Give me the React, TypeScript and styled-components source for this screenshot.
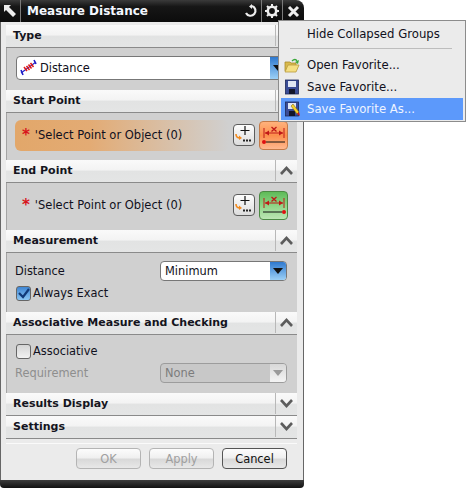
import styled, { createGlobalStyle } from "styled-components";

const GlobalStyle = createGlobalStyle`
  html, body {
    margin: 0;
    padding: 0;
    background: #fff;
  }
  body {
    font-family: "DejaVu Sans", "Liberation Sans", sans-serif;
    font-size: 11.4px;
    color: #101020;
  }
`;

const Page = styled.div`
  position: relative;
  width: 466px;
  height: 489px;
  overflow: hidden;
`;

const Dialog = styled.div`
  width: 304px;
  height: 488px;
  display: flex;
  flex-direction: column;
  background: #ebebeb;
  border-radius: 0 8px 4px 4px;
  box-sizing: border-box;
`;

const TitleBar = styled.div`
  height: 22px;
  flex: none;
  display: flex;
  align-items: center;
  background: linear-gradient(#3a3a3a 0, #161616 30%, #0c0c0c 100%);
  border-radius: 0 8px 0 0;
  color: #fff;
  box-sizing: border-box;
`;

const TitleTool = styled.div<{ $w: number; $divider?: boolean }>`
  width: ${(p) => p.$w}px;
  height: 22px;
  flex: none;
  display: flex;
  align-items: center;
  justify-content: center;
  box-sizing: border-box;
  border-right: ${(p) => (p.$divider ? "1px solid #7a7a7a" : "none")};
`;

const Title = styled.div`
  flex: 1;
  padding-left: 6px;
  font-size: 12px;
  font-weight: bold;
  color: #f4f8ff;
  white-space: nowrap;
`;

const Body = styled.div`
  flex: 1;
  display: flex;
  flex-direction: column;
  padding: 3px 7px 0 6px;
  box-shadow: inset 1px 0 #666, inset -1px 0 #666;
`;

const SectionHead = styled.div`
  height: 23px;
  flex: none;
  display: flex;
  align-items: center;
  box-sizing: border-box;
  padding-bottom: 1px;
  background: linear-gradient(#fafafa 0, #f3f3f3 46%, #e2e3e3 50%, #e4e5e5 100%);
  border-bottom: 1px solid #8a8a8a;
`;

const SectionTitle = styled.div`
  flex: 1;
  padding-left: 7px;
  font-weight: bold;
  font-size: 11px;
  color: #141420;
  white-space: nowrap;
`;

const Chevron = styled.div`
  width: 22px;
  height: 21px;
  flex: none;
  display: flex;
  align-items: center;
  justify-content: center;
  box-sizing: border-box;
  border-left: 1px solid #b8b8b8;
`;

const SectionBody = styled.div<{ $h: number; $top?: number }>`
  height: ${(p) => p.$h}px;
  flex: none;
  box-sizing: border-box;
  background: #d0d0d0;
  border-left: 1px solid #a4a4a4;
  padding: ${(p) => (p.$top === undefined ? "0 10px 3px 8px" : `${p.$top}px 10px 0 8px`)};
  display: flex;
  flex-direction: column;
  justify-content: ${(p) => (p.$top === undefined ? "center" : "flex-start")};
`;

const TypeSelect = styled.div`
  position: relative;
  height: 24px;
  display: flex;
  align-items: center;
  box-sizing: border-box;
  background: #fff;
  border: 1px solid #777;
  border-radius: 4px;
  margin-left: 1px;
  padding-left: 3px;
  gap: 3px;
  overflow: hidden;
`;

const SelectRow = styled.div`
  height: 31px;
  display: flex;
  align-items: center;
  margin-right: -1px;
  gap: 4px;
`;

const SelectPrompt = styled.div<{ $active?: boolean }>`
  flex: 1;
  height: 31px;
  display: flex;
  align-items: center;
  padding-left: 7px;
  gap: 5px;
  font-size: 11.5px;
  border-radius: 6px;
  background: ${(p) =>
    p.$active ? "linear-gradient(90deg, #e2a76a 0, #e3ab74 35%, #d0d0d0 100%)" : "transparent"};
  white-space: nowrap;
`;

const Star = styled.span`
  color: #d8141c;
  font-size: 15px;
  font-weight: bold;
  line-height: 1;
`;

const SnapButton = styled.div`
  width: 22px;
  height: 22px;
  flex: none;
  box-sizing: border-box;
  border-radius: 4px;
  border: 1px solid #5c5c5c;
  display: flex;
  align-items: center;
  justify-content: center;
  background: linear-gradient(#fdfdfd, #dcdcdc);
`;

const ToneButton = styled.div<{ $tone: "orange" | "green" }>`
  width: 29px;
  height: 29px;
  flex: none;
  box-sizing: border-box;
  border-radius: 4px;
  border: 1px solid ${(p) => (p.$tone === "orange" ? "#c47a48" : "#4c8a44")};
  display: flex;
  align-items: center;
  justify-content: center;
  background: ${(p) =>
    p.$tone === "orange"
      ? "linear-gradient(#ffb27c, #fb8f4c 50%, #ffb890)"
      : "linear-gradient(#5fbb58, #8ed486 50%, #bce6b4)"};
`;

const FieldRow = styled.div<{ $top?: number }>`
  display: flex;
  align-items: center;
  height: 20px;
  margin-top: ${(p) => p.$top ?? 0}px;
`;

const FieldLabel = styled.div<{ $disabled?: boolean }>`
  flex: 1;
  color: ${(p) => (p.$disabled ? "#8e8e8e" : "#101020")};
`;

const Combo = styled.div<{ $disabled?: boolean }>`
  width: 127px;
  height: 20px;
  flex: none;
  box-sizing: border-box;
  display: flex;
  align-items: center;
  padding-left: 4px;
  border: 1px solid ${(p) => (p.$disabled ? "#9c9c9c" : "#777")};
  border-radius: 4px;
  background: ${(p) => (p.$disabled ? "#c8c8c8" : "#fff")};
  color: ${(p) => (p.$disabled ? "#7c7c7c" : "#101020")};
  position: relative;
  overflow: hidden;
`;

const ComboArrow = styled.div<{ $disabled?: boolean }>`
  position: absolute;
  top: 0;
  right: 0;
  bottom: 0;
  width: 16px;
  display: flex;
  align-items: center;
  justify-content: center;
  background: ${(p) =>
    p.$disabled ? "linear-gradient(#d8d8d8, #f4f4f4)" : "linear-gradient(#2f79cf, #9cd0f6)"};
`;

const CheckRow = styled.div<{ $top: number }>`
  display: flex;
  align-items: center;
  gap: 2px;
  height: 18px;
  margin-top: ${(p) => p.$top}px;
  margin-left: 1px;
`;

const CheckBox = styled.div<{ $on?: boolean }>`
  width: 15px;
  height: 15px;
  flex: none;
  box-sizing: border-box;
  border: 1px solid #666;
  border-radius: 3px;
  display: flex;
  align-items: center;
  justify-content: center;
  background: ${(p) =>
    p.$on ? "linear-gradient(#3f86d4, #8cc6f2)" : "linear-gradient(#d4d4d4, #f2f2f2)"};
`;

const Footer = styled.div`
  flex: none;
  margin-top: 4px;
  padding-top: 4px;
  border-top: 1px solid #fafafa;
  display: flex;
  justify-content: flex-end;
  gap: 8px;
  padding-right: 10px;
`;

const FooterButton = styled.div<{ $disabled?: boolean }>`
  width: 65px;
  height: 21px;
  box-sizing: border-box;
  display: flex;
  align-items: center;
  justify-content: center;
  border-radius: 4px;
  border: 1px solid ${(p) => (p.$disabled ? "#b4b4b4" : "#555")};
  background: linear-gradient(#fcfcfc 0, #f0f0f0 45%, #d9d9d9 55%, #e8e8e8 100%);
  color: ${(p) => (p.$disabled ? "#a0a0a0" : "#101010")};
`;

const BottomBar = styled.div`
  height: 8px;
  flex: none;
  background: linear-gradient(#3c3c3c, #111);
  border-radius: 0 0 4px 4px;
`;

const Menu = styled.div`
  position: absolute;
  left: 278px;
  top: 20px;
  width: 188px;
  height: 102px;
  box-sizing: border-box;
  background: #ebebeb;
  border: 1px solid #8c8c8c;
  padding: 1px 2px 0;
  font-size: 11.7px;
`;

const MenuText = styled.div`
  height: 23px;
  display: flex;
  align-items: center;
  padding-left: 26px;
  color: #101020;
`;

const MenuDivider = styled.div`
  height: 1px;
  background: #bdbdbd;
  margin: 3px 11px 5px 9px;
`;

const MenuItem = styled.div<{ $selected?: boolean }>`
  height: 22px;
  display: flex;
  align-items: center;
  gap: 7px;
  padding-left: 3px;
  color: ${(p) => (p.$selected ? "#eef4ff" : "#101020")};
  background: ${(p) => (p.$selected ? "#5c99fb" : "transparent")};
`;

const DownArrow = ({ color = "#111" }: { color?: string }) => (
  <svg width="10" height="6" viewBox="0 0 10 6">
    <path d="M0 0h10L5 6z" fill={color} />
  </svg>
);

const ChevronIcon = ({ up }: { up?: boolean }) => (
  <svg width="13" height="9" viewBox="0 0 13 9">
    <path
      d={up ? "M1 8L6.5 2 12 8" : "M1 1L6.5 7 12 1"}
      fill="none"
      stroke="#5c5c5c"
      strokeWidth="2.6"
    />
  </svg>
);

const SnapIcon = () => (
  <svg width="20" height="20" viewBox="0 0 20 20">
    <path d="M11 1v9M6.5 5.5h9" stroke="#111" strokeWidth="1.2" fill="none" />
    <path d="M2 9c0 3 1 4 4 4" stroke="#f28a1e" strokeWidth="1.6" fill="none" />
    <path d="M5 10.5l3 2.5-3 2z" fill="#f28a1e" />
    <path d="M9 14.5h2v2H9zM12 14.5h2v2h-2zM15 14.5h2v2h-2z" fill="#222" />
  </svg>
);

const MeasureIcon = ({ dotRight }: { dotRight?: boolean }) => (
  <svg width="27" height="27" viewBox="0 0 27 27">
    <path d="M4 6v10M24 6v10M5 11h18" stroke="#c01818" strokeWidth="1" fill="none" />
    <path d="M5 11l4-2.5v5zM23 11l-4-2.5v5z" fill="#c01818" />
    <path d="M11.5 5l5 4.5M16.5 5l-5 4.5" stroke="#c01818" strokeWidth="1.3" />
    <path d={dotRight ? "M3 20h19" : "M6 20h19"} stroke="#111" strokeWidth="1" />
    <circle cx={dotRight ? 24 : 4} cy="20" r="2" fill="#e01010" />
  </svg>
);

const DistanceIcon = () => (
  <svg width="17" height="17" viewBox="0 0 17 17">
    <path d="M1 14L16 3" stroke="#2020c8" strokeWidth="1.1" />
    <path d="M1 11l2 5M14 1l2 4" stroke="#2020c8" strokeWidth="1.6" />
    <path d="M4 8l3 4M6.5 7l3 4M8.5 5.5l3 4M10.5 4l3 4" stroke="#e01818" strokeWidth="1.5" />
  </svg>
);

const FolderIcon = () => (
  <svg width="16" height="15" viewBox="0 0 16 15">
    <path d="M1 13V4h5l1 1h5v2" fill="#d9b94c" stroke="#a88a2c" strokeWidth="0.8" />
    <path d="M1 14l3-7h11l-3 7z" fill="#f5df82" stroke="#b89a3c" strokeWidth="0.8" />
    <path d="M8 3c2-2 4-2 5 0" stroke="#3aa83a" strokeWidth="1.4" fill="none" />
    <path d="M11 4l4-2-1 4z" fill="#3aa83a" />
  </svg>
);

const FloppyIcon = ({ pencil }: { pencil?: boolean }) => (
  <svg width="16" height="16" viewBox="0 0 16 16">
    <rect x="1.5" y="1" width="13" height="14" fill="#3a4c96" stroke="#1c2858" strokeWidth="0.8" />
    <rect x="4" y="2" width="8" height="6" fill="#dfe6f4" />
    <rect x="5" y="10" width="6" height="5" fill="#12162c" />
    {pencil && <path d="M7 5l2-2 6 8-2 2z" fill="#f5d028" stroke="#6a5a10" strokeWidth="0.5" />}
    {pencil && <path d="M13 13l2-2 1 4z" fill="#d01818" />}
  </svg>
);

const sectionPrompt = "'Select Point or Object (0)";

export default function App() {
  return (
    <Page>
      <GlobalStyle />
      <Dialog>
        <TitleBar>
          <TitleTool $w={21} $divider>
            <svg width="14" height="14" viewBox="0 0 14 14">
              <path d="M1 1h7L6 3l7 7-3 3-7-7-2 2z" fill="#eee" />
            </svg>
          </TitleTool>
          <Title>Measure Distance</Title>
          <TitleTool $w={22} $divider>
            <svg width="14" height="14" viewBox="0 0 14 14">
              <path d="M8 2a5 5 0 1 1-6 7" fill="none" stroke="#eee" strokeWidth="2.2" />
              <path d="M8 0v5L5 2.5z" fill="#eee" />
            </svg>
          </TitleTool>
          <TitleTool $w={21} $divider>
            <svg width="16" height="16" viewBox="0 0 16 16">
              <circle cx="8" cy="8" r="4.2" fill="none" stroke="#eee" strokeWidth="2.6" />
              <path
                d="M8 1v3M8 12v3M1 8h3M12 8h3M3 3l2 2M11 11l2 2M13 3l-2 2M5 11l-2 2"
                stroke="#eee"
                strokeWidth="2"
              />
            </svg>
          </TitleTool>
          <TitleTool $w={21}>
            <svg width="13" height="13" viewBox="0 0 13 13">
              <path d="M2 2l9 9M11 2l-9 9" stroke="#eee" strokeWidth="3" />
            </svg>
          </TitleTool>
        </TitleBar>
        <Body>
          <SectionHead>
            <SectionTitle>Type</SectionTitle>
            <Chevron />
          </SectionHead>
          <SectionBody $h={42}>
            <TypeSelect>
              <DistanceIcon />
              Distance
              <ComboArrow>
                <DownArrow />
              </ComboArrow>
            </TypeSelect>
          </SectionBody>

          <SectionHead>
            <SectionTitle>Start Point</SectionTitle>
            <Chevron />
          </SectionHead>
          <SectionBody $h={47}>
            <SelectRow>
              <SelectPrompt $active>
                <Star>*</Star>
                {sectionPrompt}
              </SelectPrompt>
              <SnapButton>
                <SnapIcon />
              </SnapButton>
              <ToneButton $tone="orange">
                <MeasureIcon />
              </ToneButton>
            </SelectRow>
          </SectionBody>

          <SectionHead>
            <SectionTitle>End Point</SectionTitle>
            <Chevron>
              <ChevronIcon up />
            </Chevron>
          </SectionHead>
          <SectionBody $h={47}>
            <SelectRow>
              <SelectPrompt>
                <Star>*</Star>
                {sectionPrompt}
              </SelectPrompt>
              <SnapButton>
                <SnapIcon />
              </SnapButton>
              <ToneButton $tone="green">
                <MeasureIcon dotRight />
              </ToneButton>
            </SelectRow>
          </SectionBody>

          <SectionHead>
            <SectionTitle>Measurement</SectionTitle>
            <Chevron>
              <ChevronIcon up />
            </Chevron>
          </SectionHead>
          <SectionBody $h={59} $top={8}>
            <FieldRow>
              <FieldLabel>Distance</FieldLabel>
              <Combo>
                Minimum
                <ComboArrow>
                  <DownArrow />
                </ComboArrow>
              </Combo>
            </FieldRow>
            <CheckRow $top={3}>
              <CheckBox $on>
                <svg width="13" height="11" viewBox="0 0 13 11">
                  <path d="M2 5l4 4 6-8" fill="none" stroke="#123a78" strokeWidth="2.2" />
                </svg>
              </CheckBox>
              Always Exact
            </CheckRow>
          </SectionBody>

          <SectionHead>
            <SectionTitle>Associative Measure and Checking</SectionTitle>
            <Chevron>
              <ChevronIcon up />
            </Chevron>
          </SectionHead>
          <SectionBody $h={58} $top={7}>
            <CheckRow $top={0}>
              <CheckBox />
              Associative
            </CheckRow>
            <FieldRow $top={3}>
              <FieldLabel $disabled>Requirement</FieldLabel>
              <Combo $disabled>
                None
                <ComboArrow $disabled>
                  <DownArrow color="#9a9a9a" />
                </ComboArrow>
              </Combo>
            </FieldRow>
          </SectionBody>

          <SectionHead>
            <SectionTitle>Results Display</SectionTitle>
            <Chevron>
              <ChevronIcon />
            </Chevron>
          </SectionHead>
          <SectionHead>
            <SectionTitle>Settings</SectionTitle>
            <Chevron>
              <ChevronIcon />
            </Chevron>
          </SectionHead>

          <Footer>
            <FooterButton $disabled>OK</FooterButton>
            <FooterButton $disabled>Apply</FooterButton>
            <FooterButton>Cancel</FooterButton>
          </Footer>
        </Body>
        <BottomBar />
      </Dialog>

      <Menu>
        <MenuText>Hide Collapsed Groups</MenuText>
        <MenuDivider />
        <MenuItem>
          <FolderIcon />
          Open Favorite...
        </MenuItem>
        <MenuItem>
          <FloppyIcon />
          Save Favorite...
        </MenuItem>
        <MenuItem $selected>
          <FloppyIcon pencil />
          Save Favorite As...
        </MenuItem>
      </Menu>
    </Page>
  );
}
